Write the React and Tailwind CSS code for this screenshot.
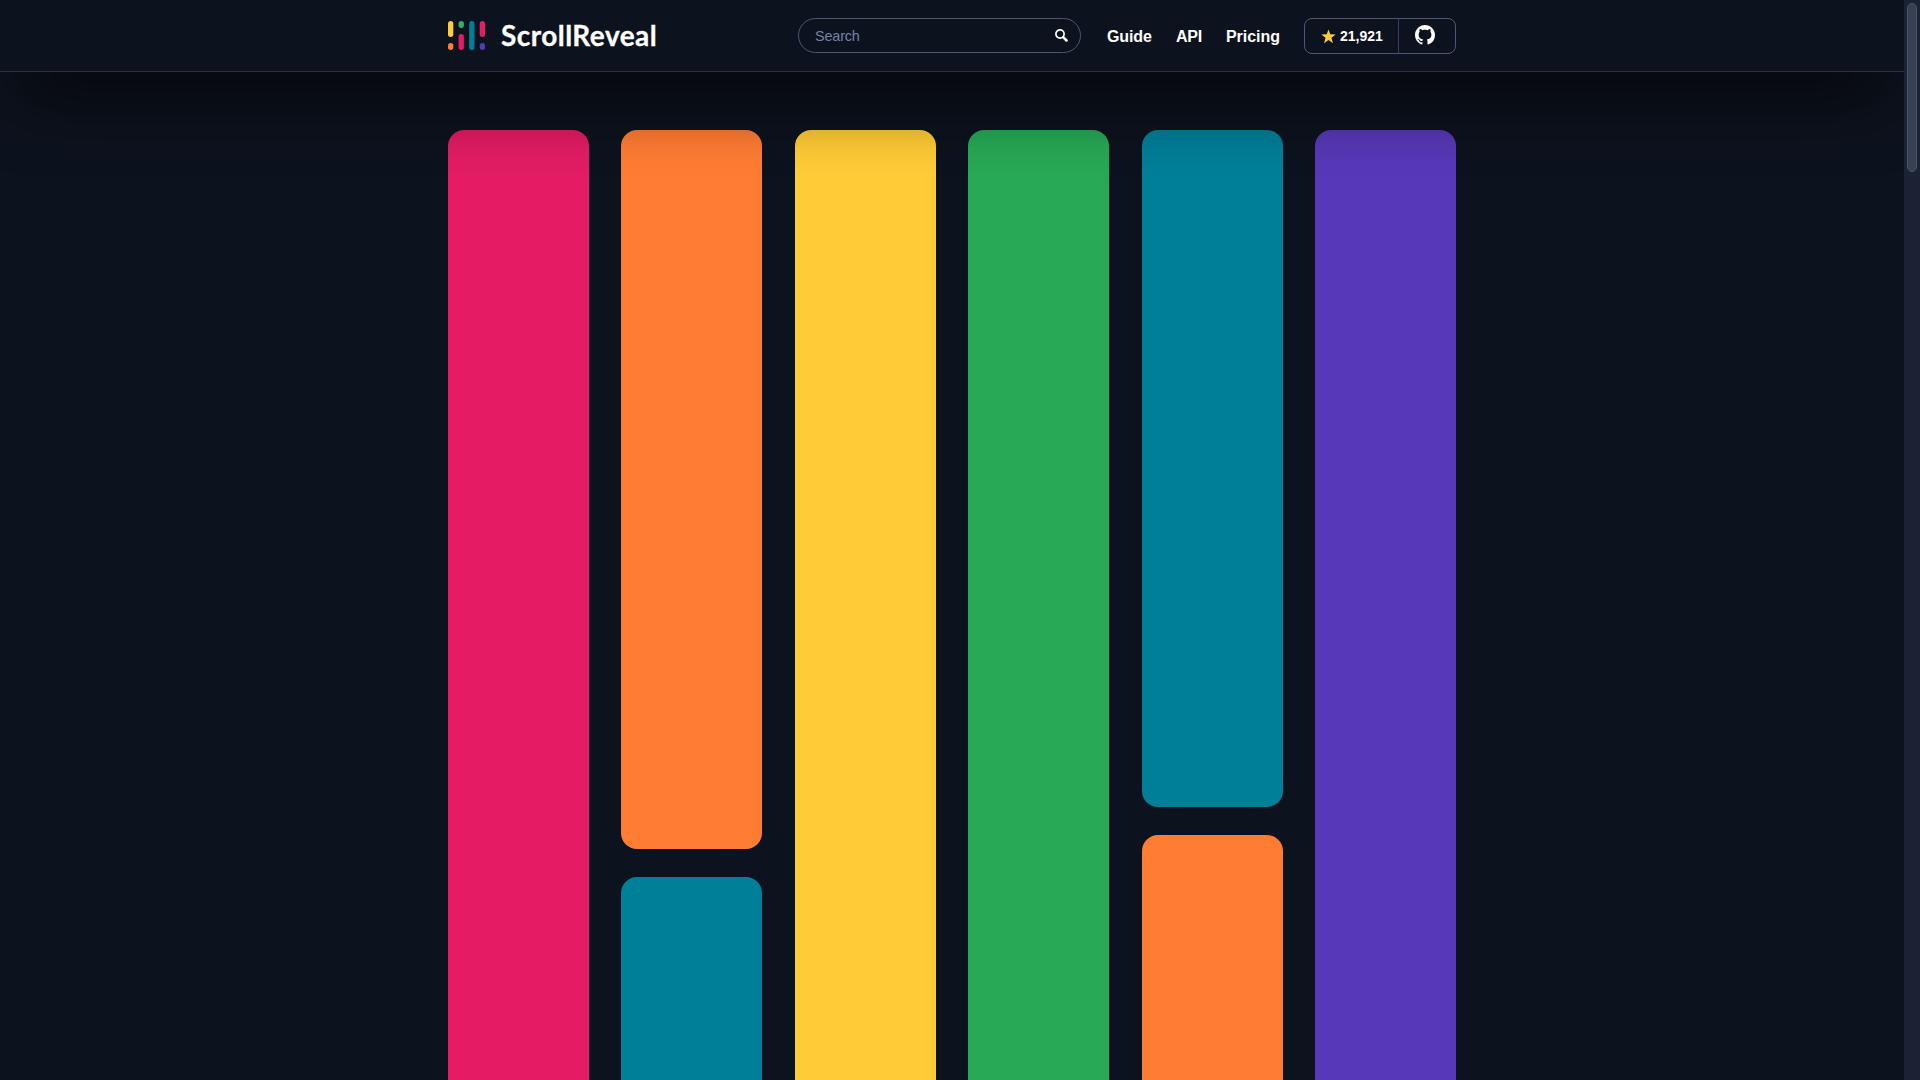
const columns = [
  [['bg-[#e31c63]', 'h-[1000px]']],
  [['bg-[#ff7d33]', 'h-[719px]'], ['bg-[#007f99]', 'h-[300px]']],
  [['bg-[#ffcb36]', 'h-[1000px]']],
  [['bg-[#27a955]', 'h-[1000px]']],
  [['bg-[#007f99]', 'h-[677px]'], ['bg-[#ff7d33]', 'h-[300px]']],
  [['bg-[#5639b8]', 'h-[1000px]']],
];

function LogoMark() {
  return (
    <svg width="37" height="29" viewBox="0 0 37 29" className="block shrink-0">
      <rect x="0" y="0" width="5.3" height="16" rx="2.65" fill="#ffcb36" />
      <rect x="0" y="22" width="5.3" height="7" rx="2.65" fill="#ff7d33" />
      <rect x="10.6" y="0" width="5.3" height="7" rx="2.65" fill="#2fb167" />
      <rect x="10.6" y="13" width="5.3" height="16" rx="2.65" fill="#e31c63" />
      <rect x="21.2" y="0" width="5.3" height="29" rx="2.65" fill="#007f99" />
      <rect x="31.7" y="0" width="5.3" height="16" rx="2.65" fill="#e31c63" />
      <rect x="31.7" y="22" width="5.3" height="7" rx="2.65" fill="#5639b8" />
    </svg>
  );
}

function Header() {
  return (
    <header className="relative z-10 h-[72px] border-b border-[#2d303d] bg-[#0d131e] shadow-[0_35px_70px_-14px_rgba(0,0,0,0.9)]">
      <div className="mx-auto flex h-[71px] w-[1008px] items-start pt-[18px]">
        <a className="flex" href="#">
          <span className="pt-[3px]"><LogoMark /></span>
          <span className="ml-[16px] w-[157px] whitespace-nowrap font-['Lato',sans-serif] text-[28px] font-bold leading-[34px] tracking-[0.45px] text-white [-webkit-text-stroke:0.3px_white]">ScrollReveal</span>
        </a>
        <div className="ml-[140px] flex h-[35px] w-[283px] items-center justify-between rounded-full border border-[#4a5875] pl-4 pr-[12px]">
          <span className="pt-[2px] text-[14.4px] tracking-[-0.15px] text-[#7583a8]">Search</span>
          <svg width="13" height="13" viewBox="0 0 13 13" className="block" fill="none" stroke="#fff">
            <circle cx="5" cy="5" r="4.1" strokeWidth="1.7" />
            <path d="M8.2 8.2 L11.5 11.5" strokeWidth="2.5" strokeLinecap="round" />
          </svg>
        </div>
        <nav className="ml-[26px] flex h-[37px] w-[197px] items-center pt-px text-[16px] font-bold text-white">
          <a href="#" className="w-[69px] tracking-[-0.1px]">Guide</a>
          <a href="#" className="w-[50px] tracking-[-0.2px]">API</a>
          <a href="#" className="tracking-[-0.05px]">Pricing</a>
        </nav>
        <div className="flex h-[36px] w-[152px] rounded-[8px] border border-[#4a5875]">
          <a href="#" className="flex w-[94px] items-center border-r border-[#35415c] pl-4 text-[14px] font-bold text-white">
            <svg width="15" height="15" viewBox="0 0 15 15" className="mr-[4px] block"><path fill="#ffcb36" d="M7.5 0.4 L9.3 5.3 L14.7 5.5 L10.4 8.8 L12 14.2 L7.5 11.1 L3 14.2 L4.6 8.8 L0.3 5.5 L5.7 5.3Z" /></svg>
            <span>21,921</span>
          </a>
          <a href="#" className="flex items-start pl-4 pt-[6px]">
            <svg width="20" height="20" viewBox="0 0 16 16" className="block" fill="#fff"><path d="M8 0C3.58 0 0 3.58 0 8c0 3.54 2.29 6.53 5.47 7.59.4.07.55-.17.55-.38 0-.19-.01-.82-.01-1.49-2.01.37-2.53-.49-2.69-.94-.09-.23-.48-.94-.82-1.13-.28-.15-.68-.52-.01-.53.63-.01 1.08.58 1.23.82.72 1.21 1.87.87 2.33.66.07-.52.28-.87.51-1.07-1.78-.2-3.64-.89-3.64-3.95 0-.87.31-1.59.82-2.15-.08-.2-.36-1.02.08-2.12 0 0 .67-.21 2.2.82.64-.18 1.32-.27 2-.27s1.36.09 2 .27c1.53-1.04 2.2-.82 2.2-.82.44 1.1.16 1.92.08 2.12.51.56.82 1.27.82 2.15 0 3.07-1.87 3.75-3.65 3.95.29.25.54.73.54 1.48 0 1.07-.01 1.93-.01 2.2 0 .21.15.46.55.38A8.01 8.01 0 0 0 16 8c0-4.42-3.58-8-8-8z" /></svg>
          </a>
        </div>
      </div>
    </header>
  );
}

export default function App() {
  return (
    <div className="flex h-screen overflow-hidden bg-[#0d131e] font-['Liberation_Sans',Arial,sans-serif]">
      <div className="w-[1904px] overflow-hidden">
        <Header />
        <main className="mx-auto flex w-[1008px] justify-between pt-[58px]">
          {columns.map((bars, i) => (
            <div key={i} className="flex w-[141px] flex-col gap-7">
              {bars.map(([color, height], j) => (
                <div key={j} className={`shrink-0 rounded-2xl ${color} ${height}`} />
              ))}
            </div>
          ))}
        </main>
      </div>
      <div className="w-4 bg-[#1a2234] pl-[3px] pt-[3px]">
        <div className="h-[169px] w-[10px] rounded-full border border-[#4a5470] bg-[#384152]" />
      </div>
    </div>
  );
}
